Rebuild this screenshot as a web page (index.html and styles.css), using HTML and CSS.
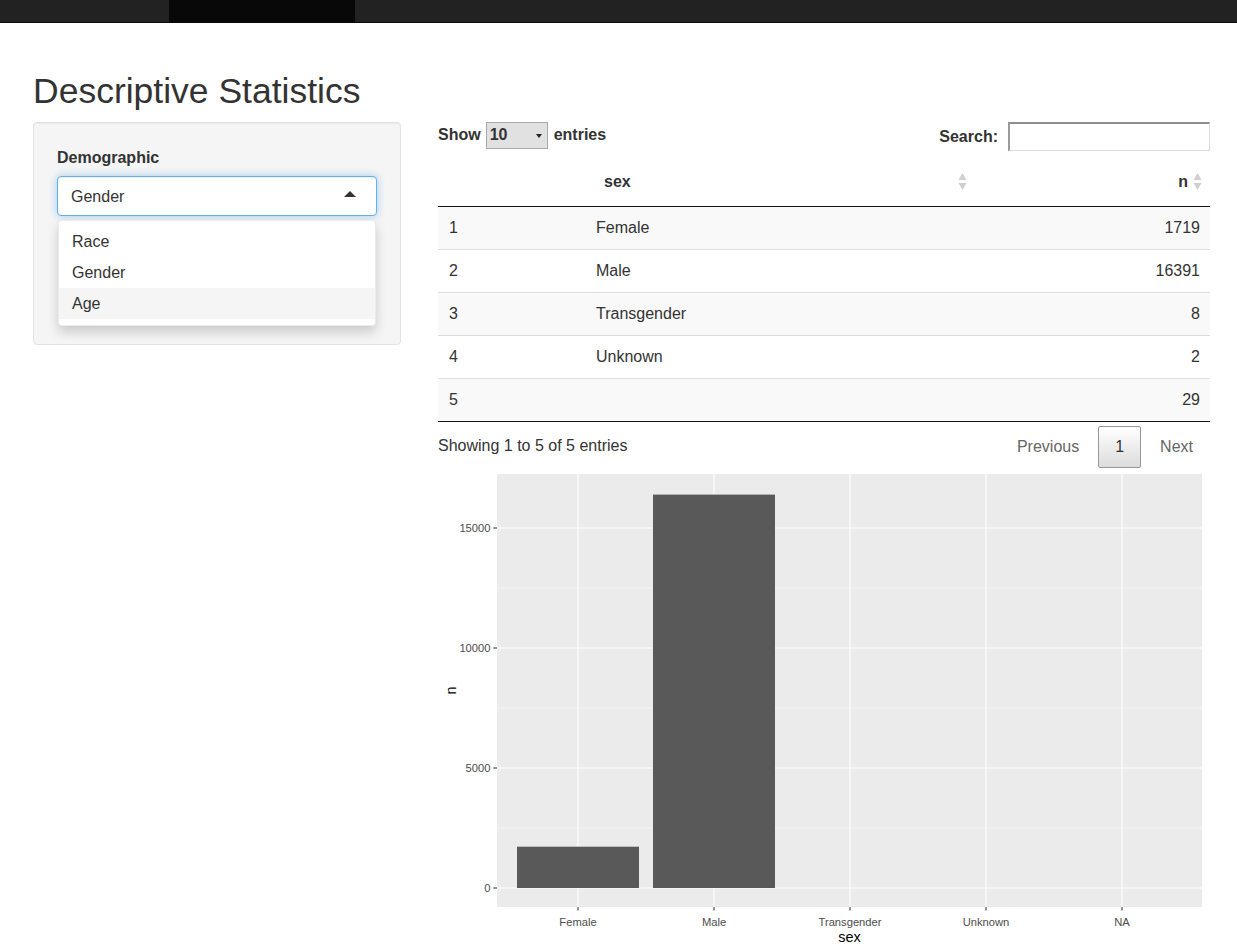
FILE: index.html
```html
<!DOCTYPE html>
<html lang="en">
<head>
<meta charset="utf-8">
<title>Descriptive Statistics</title>
<link rel="stylesheet" href="styles.css">
</head>
<body>
<nav class="navbar">
  <div class="brand"></div>
  <div class="nav-item active"></div>
</nav>
<main class="page">
  <h2 class="title">Descriptive Statistics</h2>
  <div class="layout">
    <aside class="well">
      <div class="form-group">
        <label class="control-label">Demographic</label>
        <div class="selectize">
          <div class="selectize-input"><span>Gender</span><span class="caret-up"></span></div>
          <div class="selectize-dropdown">
            <div class="option">Race</div>
            <div class="option">Gender</div>
            <div class="option active">Age</div>
          </div>
        </div>
      </div>
    </aside>
    <section class="main-panel">
      <div class="dt-controls">
        <div class="dt-length">
          <span>Show</span>
          <span class="len-select"><span>10</span><span class="caret-down"></span></span>
          <span>entries</span>
        </div>
        <div class="dt-filter">
          <label class="search-label">Search:</label>
          <input class="search-input" type="text">
        </div>
      </div>
      <table class="dt">
        <colgroup><col class="c-idx"><col class="c-sex"><col class="c-n"></colgroup>
        <thead>
          <tr>
            <th class="idx"></th>
            <th class="sortable">sex<svg class="sort-icon" width="9" height="19" viewBox="0 0 9 19"><polygon points="4.5,1 0.5,8 8.5,8" fill="#cfcfcf"/><polygon points="0.5,11 8.5,11 4.5,18" fill="#cfcfcf"/></svg></th>
            <th class="sortable num">n<svg class="sort-icon" width="9" height="19" viewBox="0 0 9 19"><polygon points="4.5,1 0.5,8 8.5,8" fill="#cfcfcf"/><polygon points="0.5,11 8.5,11 4.5,18" fill="#cfcfcf"/></svg></th>
          </tr>
        </thead>
        <tbody>
          <tr><td class="idx">1</td><td>Female</td><td class="num">1719</td></tr>
          <tr><td class="idx">2</td><td>Male</td><td class="num">16391</td></tr>
          <tr><td class="idx">3</td><td>Transgender</td><td class="num">8</td></tr>
          <tr><td class="idx">4</td><td>Unknown</td><td class="num">2</td></tr>
          <tr><td class="idx">5</td><td></td><td class="num">29</td></tr>
        </tbody>
      </table>
      <div class="dt-footer">
        <div class="dt-info">Showing 1 to 5 of 5 entries</div>
        <div class="dt-paginate">
          <span class="page-btn">Previous</span>
          <span class="page-btn current">1</span>
          <span class="page-btn">Next</span>
        </div>
      </div>
      <svg class="plot" width="772" height="476" viewBox="0 0 772 476">
        <rect x="59" y="6" width="705" height="433" fill="#ebebeb"/>
        <g stroke="#ffffff" stroke-width="0.53">
          <line x1="59" y1="120" x2="764" y2="120"/>
          <line x1="59" y1="240" x2="764" y2="240"/>
          <line x1="59" y1="360" x2="764" y2="360"/>
        </g>
        <g stroke="#ffffff" stroke-width="1.07">
          <line x1="59" y1="60" x2="764" y2="60"/>
          <line x1="59" y1="180" x2="764" y2="180"/>
          <line x1="59" y1="300" x2="764" y2="300"/>
          <line x1="59" y1="420" x2="764" y2="420"/>
          <line x1="140" y1="6" x2="140" y2="439"/>
          <line x1="276" y1="6" x2="276" y2="439"/>
          <line x1="412" y1="6" x2="412" y2="439"/>
          <line x1="548" y1="6" x2="548" y2="439"/>
          <line x1="684" y1="6" x2="684" y2="439"/>
        </g>
        <g fill="#595959">
          <rect x="79" y="378.7" width="122" height="41.3"/>
          <rect x="215" y="26.6" width="122" height="393.4"/>
        </g>
        <g stroke="#333333" stroke-width="1.07">
          <line x1="55.5" y1="60" x2="59" y2="60"/>
          <line x1="55.5" y1="180" x2="59" y2="180"/>
          <line x1="55.5" y1="300" x2="59" y2="300"/>
          <line x1="55.5" y1="420" x2="59" y2="420"/>
          <line x1="140" y1="439" x2="140" y2="442.5"/>
          <line x1="276" y1="439" x2="276" y2="442.5"/>
          <line x1="412" y1="439" x2="412" y2="442.5"/>
          <line x1="548" y1="439" x2="548" y2="442.5"/>
          <line x1="684" y1="439" x2="684" y2="442.5"/>
        </g>
        <g class="tick-label" text-anchor="end">
          <text x="52.5" y="64">15000</text>
          <text x="52.5" y="184">10000</text>
          <text x="52.5" y="304">5000</text>
          <text x="52.5" y="424">0</text>
        </g>
        <g class="tick-label" text-anchor="middle">
          <text x="140" y="457.5">Female</text>
          <text x="276" y="457.5">Male</text>
          <text x="412" y="457.5">Transgender</text>
          <text x="548" y="457.5">Unknown</text>
          <text x="684" y="457.5">NA</text>
        </g>
        <text class="axis-title" x="411.5" y="473.5" text-anchor="middle">sex</text>
        <text class="axis-title" x="18" y="222.5" text-anchor="middle" transform="rotate(-90 18 222.5)">n</text>
      </svg>
    </section>
  </div>
</main>
</body>
</html>
```

FILE: styles.css
```css
html, body {
  margin: 0;
  padding: 0;
}

body {
  font-family: "Liberation Sans", Arial, Helvetica, sans-serif;
  font-size: 16px;
  line-height: 1.42857;
  color: #333;
  background: #fff;
  overflow: hidden;
}

.navbar {
  display: flex;
  height: 22px;
  background: #222;
  border-bottom: 1px solid #080808;
}

.brand {
  width: 169px;
}

.nav-item {
  width: 186px;
}

.nav-item.active {
  background: #080808;
}

.page {
  padding: 0 27px 0 33px;
}

.title {
  margin: 48px 0 11px;
  font-size: 35.5px;
  font-weight: 400;
  line-height: 40px;
  color: #333;
}

.layout {
  display: flex;
  align-items: flex-start;
  gap: 37px;
}

/* left well */
.well {
  width: 368px;
  box-sizing: border-box;
  background: #f5f5f5;
  border: 1px solid #e3e3e3;
  border-radius: 4px;
  box-shadow: inset 0 1px 1px rgba(0, 0, 0, 0.05);
  padding: 23px;
}

.control-label {
  display: block;
  font-weight: 700;
  line-height: 23px;
  margin-bottom: 7px;
}

.selectize {
  position: relative;
  margin-bottom: 105px;
}

.selectize-input {
  height: 40px;
  box-sizing: border-box;
  display: flex;
  align-items: center;
  justify-content: space-between;
  padding: 0 20px 0 13px;
  background: #fff;
  border: 1px solid #66afe9;
  border-radius: 4px;
  box-shadow: inset 0 1px 1px rgba(0, 0, 0, 0.075), 0 0 8px rgba(102, 175, 233, 0.6);
  line-height: 23px;
}

.caret-up {
  width: 0;
  height: 0;
  border-left: 6.5px solid transparent;
  border-right: 6.5px solid transparent;
  border-bottom: 6px solid #333;
  margin-bottom: 4px;
}

.selectize-dropdown {
  position: absolute;
  top: 44px;
  left: 1px;
  right: 1px;
  z-index: 10;
  background: #fff;
  border: 1px solid rgba(0, 0, 0, 0.08);
  border-radius: 4px;
  box-shadow: 0 6px 12px rgba(0, 0, 0, 0.175);
  padding: 5px 0 6px;
}

.option {
  padding: 4px 13px;
  line-height: 23px;
  color: #333;
}

.option.active {
  background: #f5f5f5;
}

/* right panel */
.main-panel {
  width: 772px;
}

.dt-controls {
  display: flex;
  justify-content: space-between;
  align-items: flex-start;
  height: 30px;
}

.dt-length {
  display: flex;
  align-items: center;
  height: 27px;
  font-weight: 700;
}

.len-select {
  width: 62px;
  height: 27px;
  box-sizing: border-box;
  margin: 0 6px 0 5px;
  padding: 0 5px 0 3px;
  display: flex;
  align-items: center;
  justify-content: space-between;
  background: #e1e1e1;
  border: 1px solid #a9a9a9;
}

.caret-down {
  width: 0;
  height: 0;
  border-left: 3px solid transparent;
  border-right: 3px solid transparent;
  border-top: 4px solid #222;
}

.dt-filter {
  display: flex;
  align-items: flex-start;
}

.search-label {
  font-weight: 700;
  line-height: 23px;
  margin-top: 3px;
  margin-right: 10px;
}

.search-input {
  width: 202px;
  height: 29px;
  box-sizing: border-box;
  margin: 0;
  padding: 0 4px;
  background: #fff;
  border-style: solid;
  border-width: 2px 1px 1px 2px;
  border-color: #8e8e8e #dcdcdc #dcdcdc #9a9a9a;
  font: inherit;
}

.dt {
  width: 772px;
  margin-top: 8px;
  border-collapse: collapse;
  table-layout: fixed;
  border-bottom: 1px solid #111;
}

.c-idx { width: 148px; }
.c-sex { width: 389px; }
.c-n { width: 235px; }

.dt th {
  position: relative;
  text-align: left;
  font-weight: 700;
  line-height: 23px;
  padding: 10px 18px 13px;
  border-bottom: 1px solid #111;
}

.dt th.num {
  text-align: right;
  padding-right: 22px;
}

.sort-icon {
  position: absolute;
  right: 8px;
  top: 12px;
}

.dt td {
  padding: 10px;
  line-height: 22px;
  border-top: 1px solid #ddd;
}

.dt tbody tr:first-child td {
  border-top: none;
}

.dt tbody tr:nth-child(odd) {
  background: #f9f9f9;
}

.dt td.idx {
  padding-left: 11px;
}

.dt td.num {
  text-align: right;
}

.dt-footer {
  display: flex;
  justify-content: space-between;
  align-items: flex-start;
}

.dt-info {
  padding-top: 12px;
  line-height: 23px;
}

.dt-paginate {
  display: flex;
  padding-top: 4px;
}

.page-btn {
  padding: 8px 16px;
  line-height: 24px;
  border: 1px solid transparent;
  border-radius: 2px;
  margin-left: 2px;
  color: #666;
}

.page-btn.current {
  color: #333;
  border-color: #979797;
  background: linear-gradient(to bottom, #fff 0%, #dcdcdc 100%);
}

.plot {
  display: block;
}

.tick-label text {
  font-family: "Liberation Sans", Arial, sans-serif;
  font-size: 11.2px;
  fill: #4d4d4d;
}

.axis-title {
  font-family: "Liberation Sans", Arial, sans-serif;
  font-size: 14.5px;
  fill: #000;
}
```
